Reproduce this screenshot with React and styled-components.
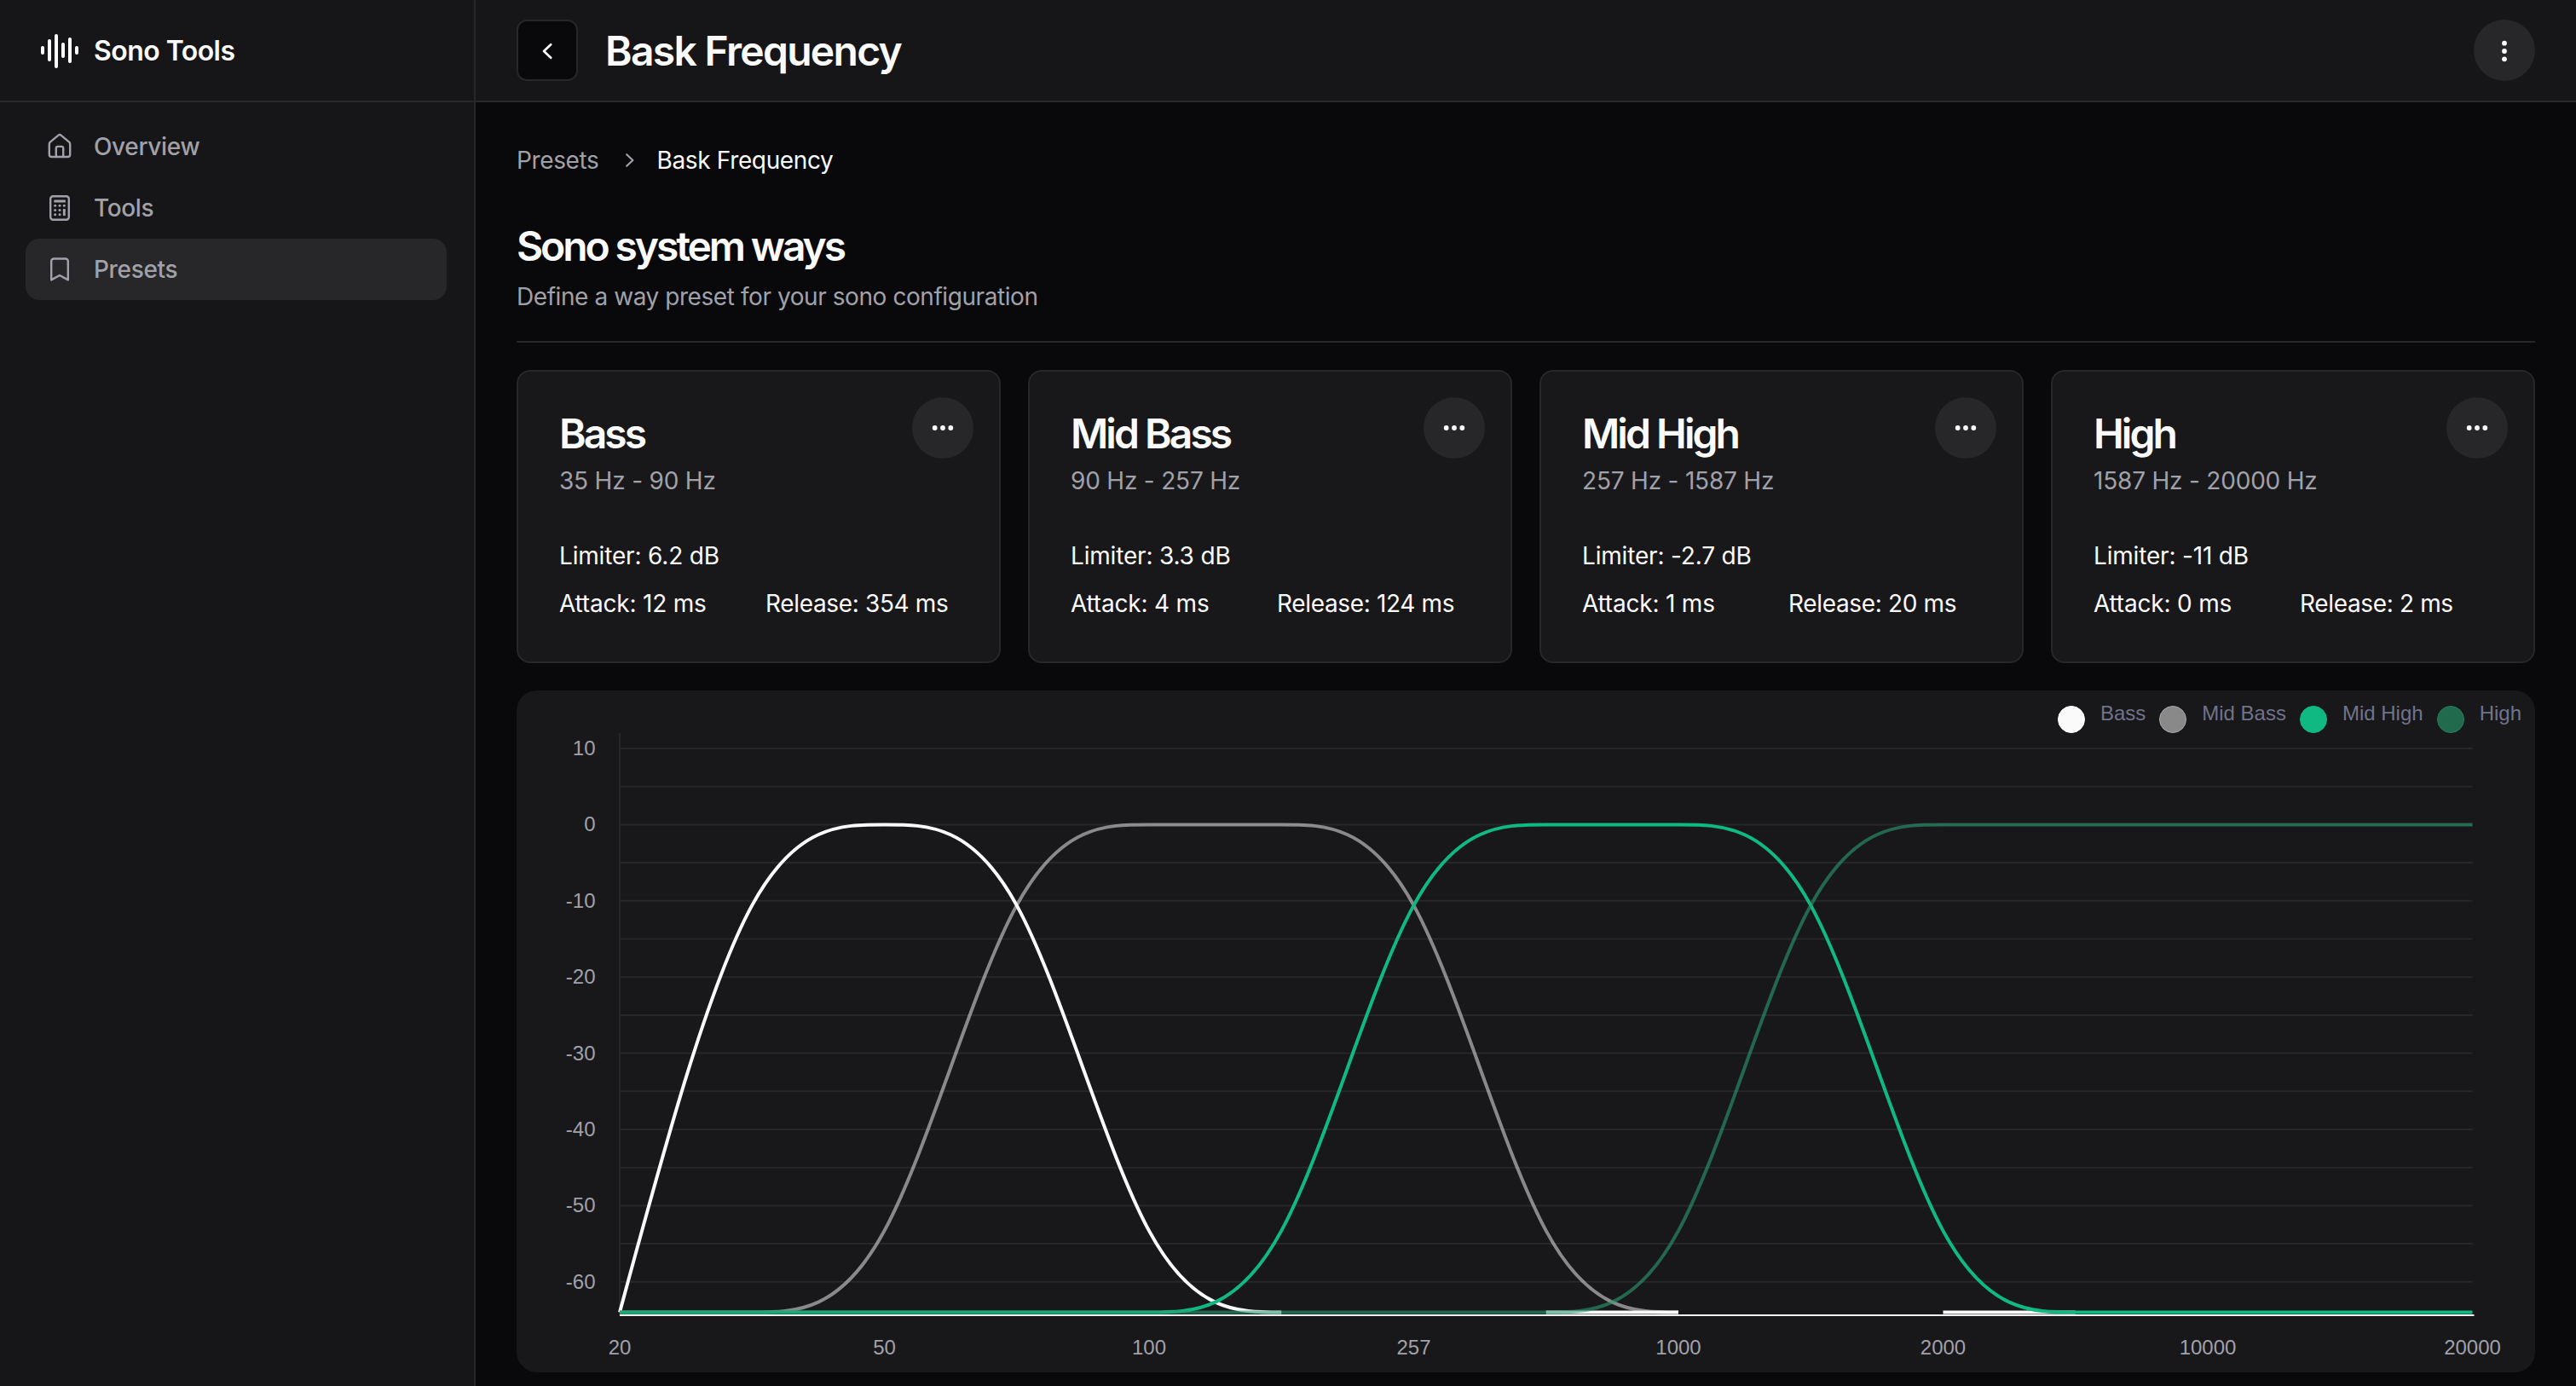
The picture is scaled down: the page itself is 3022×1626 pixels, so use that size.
import styled, { createGlobalStyle } from "styled-components";
import { AudioLines } from "lucide-react";

const GlobalStyle = createGlobalStyle`
  * {
    box-sizing: border-box;
    margin: 0;
    padding: 0;
  }

  body {
    background: #09090b;
    color: #fafafa;
    font-family: Inter, sans-serif;
    font-size: 28px;
    line-height: 40px;
    overflow: hidden;
  }
`;

const Container = styled.div`
  display: grid;
  grid-template-columns: 558px 1fr;
  height: 1626px;
`;

const Sidebar = styled.aside`
  background: #161618;
  border-right: 2px solid #27272a;
`;

const Brand = styled.div`
  display: flex;
  align-items: center;
  gap: 16px;
  height: 120px;
  padding: 2px 0 0 46px;
  border-bottom: 2px solid #27272a;
`;

const BrandName = styled.span`
  font-size: 32px;
  font-weight: 600;
  letter-spacing: -0.55px;
`;

const Nav = styled.nav`
  display: flex;
  flex-direction: column;
  padding: 16px 32px 16px 30px;
`;

const NavItem = styled.a`
  display: flex;
  align-items: center;
  gap: 24px;
  height: 72px;
  padding: 0 24px;
  border-radius: 16px;
  color: #a1a1aa;
  font-weight: 500;
  letter-spacing: -0.35px;
  background: ${({ $active }) => ($active ? "#27272a" : "transparent")};
`;

const Main = styled.main`
  display: flex;
  flex-direction: column;
`;

const Header = styled.header`
  display: flex;
  align-items: center;
  gap: 32px;
  height: 120px;
  padding: 0 48px;
  background: #161618;
  border-bottom: 2px solid #27272a;
`;

const BackButton = styled.button`
  display: flex;
  align-items: center;
  justify-content: center;
  width: 72px;
  height: 72px;
  background: #09090b;
  border: 2px solid #27272a;
  border-radius: 12px;
`;

const PageTitle = styled.h1`
  flex: 1;
  padding-top: 2px;
  font-size: 48px;
  line-height: 48px;
  font-weight: 600;
  letter-spacing: -1.7px;
`;

const RoundButton = styled.button`
  display: flex;
  align-items: center;
  justify-content: center;
  flex-shrink: 0;
  width: 72px;
  height: 72px;
  background: #27272a;
  border: none;
  border-radius: 50%;
`;

const Content = styled.div`
  padding: 48px;
`;

const Breadcrumb = styled.div`
  display: flex;
  align-items: center;
  gap: 20px;
`;

const Crumb = styled.span`
  color: ${({ $current }) => ($current ? "#fafafa" : "#a1a1aa")};
  letter-spacing: -0.36px;
`;

const Title = styled.h2`
  font-size: 48px;
  line-height: 50px;
  font-weight: 600;
  letter-spacing: -2.95px;
`;

const Muted = styled.p`
  color: #a1a1aa;
  letter-spacing: -0.2px;
`;

const Description = styled(Muted)`
  letter-spacing: -0.43px;
`;

const Section = styled.section`
  display: flex;
  flex-direction: column;
  gap: 14px;
  margin-top: 56px;
  padding-bottom: 32px;
  border-bottom: 2px solid #27272a;

  ${Title} {
    letter-spacing: -3.12px;
  }
`;

const Cards = styled.div`
  display: grid;
  grid-template-columns: repeat(4, 1fr);
  gap: 32px;
  margin: 32px 0;
`;

const Card = styled.article`
  height: 344px;
  padding: 48px;
  background: #18181b;
  border: 2px solid #27272a;
  border-radius: 16px;
`;

const CardHeader = styled.div`
  display: flex;
  justify-content: space-between;
  height: 100px;
  margin-bottom: 48px;

  ${RoundButton} {
    margin: -18px -18px 0 0;
  }
`;

const CardHeading = styled.div`
  display: flex;
  flex-direction: column;
  gap: 10px;
`;

const Settings = styled.div`
  display: grid;
  grid-template-columns: 1fr 1fr;
  gap: 16px;
`;

const Setting = styled.p`
  white-space: nowrap;
  letter-spacing: -0.2px;
`;

const Limiter = styled(Setting)`
  grid-column: span 2;
  letter-spacing: -0.18px;
`;

const Release = styled(Setting)`
  letter-spacing: -0.35px;
`;

const ChartPanel = styled.div`
  height: 800px;
  background: #18181b;
  border-radius: 24px;
`;

const Legend = styled.div`
  display: flex;
  justify-content: flex-end;
  gap: 16px;
  height: 50px;
  padding: 18px 16px 0 0;
  font-family: "Liberation Sans", sans-serif;
  font-size: 24px;
  line-height: 18px;
  color: #70738a;
`;

const LegendItem = styled.div`
  display: flex;
  gap: 18px;
`;

const Dot = styled.span`
  width: 32px;
  height: 32px;
  border-radius: 50%;
  background: ${({ $color }) => $color};
  border: 1px solid ${({ $rim }) => $rim};
`;

const Plot = styled.svg`
  display: block;
  font-family: "Liberation Sans", sans-serif;
  font-size: 24px;
  fill: #a1a1aa;
`;

const Icon = ({ children }) => (
  <svg
    width="32"
    height="32"
    viewBox="0 0 32 32"
    fill="none"
    stroke="currentColor"
    strokeWidth="2.4"
    strokeLinecap="round"
    strokeLinejoin="round"
  >
    {children}
  </svg>
);

const HomeIcon = () => (
  <Icon>
    <path d="M3.8 13.2c0-1.1.4-1.8 1.1-2.5l9.6-8c.9-.8 2.1-.8 3 0l9.6 8c.7.7 1.1 1.4 1.1 2.5v12a2.8 2.8 0 0 1-2.8 2.8H6.6a2.8 2.8 0 0 1-2.8-2.8z" />
    <path d="M11.8 28V17.9a2 2 0 0 1 2-2h4.4a2 2 0 0 1 2 2V28" />
  </Icon>
);

const CalculatorIcon = () => (
  <Icon>
    <rect x="5.2" y="2.2" width="21.6" height="27.6" rx="3" />
    <g fill="currentColor" stroke="none">
      <rect x="9.3" y="6.4" width="13.6" height="3.2" rx="0.6" />
      {[13.3, 18.4, 23.7].map((y) =>
        [10.7, 16, 21.3].map((x) => <circle key={`${x}-${y}`} cx={x} cy={y} r="1.5" />)
      )}
      <rect x="19.9" y="17" width="2.8" height="8.1" rx="1.3" />
    </g>
  </Icon>
);

const BookmarkIcon = () => (
  <Icon>
    <path d="M6.2 28.4V6.5a3 3 0 0 1 3-3h13.6a3 3 0 0 1 3 3v21.9L16 23z" />
  </Icon>
);

const BackIcon = () => (
  <svg width="32" height="32" viewBox="0 0 32 32" fill="none">
    <path
      d="M20.2 9.2L12 17l8.2 7.8"
      stroke="#fafafa"
      strokeWidth="2.7"
      strokeLinecap="round"
      strokeLinejoin="round"
    />
  </svg>
);

const CrumbArrow = () => (
  <svg width="28" height="28" viewBox="0 0 28 28" fill="none">
    <path
      d="M12.2 7.2L19.4 14l-7.2 6.8"
      stroke="#a1a1aa"
      strokeWidth="2.2"
      strokeLinecap="round"
      strokeLinejoin="round"
    />
  </svg>
);

const Dots = ({ vertical }) => (
  <svg width="32" height="32" viewBox="0 0 32 32" fill="#fafafa">
    {[6.7, 16, 25.3].map((p) => (
      <circle key={p} cx={vertical ? 16 : p} cy={vertical ? p + 1 : 16} r="2.9" />
    ))}
  </svg>
);

const ways = [
  { name: "Bass", range: "35 Hz - 90 Hz", limiter: "6.2", attack: 12, release: 354 },
  { name: "Mid Bass", range: "90 Hz - 257 Hz", limiter: "3.3", attack: 4, release: 124 },
  { name: "Mid High", range: "257 Hz - 1587 Hz", limiter: "-2.7", attack: 1, release: 20 },
  { name: "High", range: "1587 Hz - 20000 Hz", limiter: "-11", attack: 0, release: 2 },
];

const legend = [
  { name: "Bass", color: "#fafafa", rim: "#ffffff" },
  { name: "Mid Bass", color: "#898989", rim: "#a8a8a8" },
  { name: "Mid High", color: "#10b981", rim: "#10b981" },
  { name: "High", color: "#216a4e", rim: "#22805c" },
];

const LOW = -64;
const SLOPE = -53.3;
const CROSS = -10.6;

// each run is [first index, values]; gaps between runs are not drawn
const series = [
  {
    color: "#fafafa",
    opacity: 1,
    runs: [
      [0, [LOW, CROSS, 0, CROSS, SLOPE, LOW]],
      [7, [LOW, LOW]],
      [10, [LOW, LOW]],
    ],
  },
  {
    color: "#fafafa",
    opacity: 0.5,
    runs: [[0, [LOW, LOW, SLOPE, CROSS, 0, 0, CROSS, SLOPE, LOW]]],
  },
  {
    color: "#10b981",
    opacity: 1,
    runs: [
      [0, [LOW, LOW, LOW, LOW, LOW, SLOPE, CROSS, 0, 0, CROSS, SLOPE, LOW, LOW, LOW, LOW]],
    ],
  },
  {
    color: "#2a9d72",
    opacity: 0.6,
    runs: [
      [0, [LOW, LOW, LOW, LOW, LOW, LOW, LOW, LOW, SLOPE, CROSS, 0, 0, 0, 0, 0]],
    ],
  },
];

const xLabels = [20, 50, 100, 257, 1000, 2000, 10000, 20000];
const gridValues = Array.from({ length: 15 }, (_, i) => 10 - i * 5);

const X0 = 121;
const X1 = 2294.5;
const STEP = (X1 - X0) / 14;
const xAt = (i) => X0 + i * STEP;
const yAt = (v) => 107.4 - v * 8.94;

// monotone cubic through evenly spaced points
const smoothPath = ([start, values]) => {
  const ys = values.map(yAt);
  const last = ys.length - 1;
  const tangents = ys.map((y, i) => {
    if (i === 0 || i === last) return 0;
    const before = y - ys[i - 1];
    const after = ys[i + 1] - y;
    if (before * after <= 0) return 0;
    return Math.sign(after) * 3 * Math.min(Math.abs(before), Math.abs(after));
  });
  tangents[0] = (3 * (ys[1] - ys[0]) - tangents[1]) / 2;
  let d = `M${xAt(start)},${ys[0]}`;
  for (let i = 0; i < last; i++) {
    const x = xAt(start + i);
    d += `C${x + STEP / 3},${ys[i] + tangents[i] / 3}`;
    d += ` ${x + (STEP * 2) / 3},${ys[i + 1] - tangents[i + 1] / 3}`;
    d += ` ${x + STEP},${ys[i + 1]}`;
  }
  return d;
};

const Chart = () => (
  <ChartPanel>
    <Legend>
      {legend.map(({ name, color, rim }) => (
        <LegendItem key={name}>
          <Dot $color={color} $rim={rim} />
          {name}
        </LegendItem>
      ))}
    </Legend>
    <Plot width="2368" height="750" viewBox="0 0 2368 750">
      {gridValues.map((v) => (
        <line key={v} x1={X0} x2={X1} y1={yAt(v)} y2={yAt(v)} stroke="#27272a" strokeWidth="2" />
      ))}
      <line x1={X0} x2={X0} y1="0" y2="683" stroke="#27272a" strokeWidth="2" />
      {gridValues
        .filter((v) => v % 10 === 0)
        .map((v) => (
          <text key={v} x="92.5" y={yAt(v) + 8} textAnchor="end">
            {v}
          </text>
        ))}
      {xLabels.map((label, i) => (
        <text key={label} x={xAt(i * 2)} y="729" textAnchor="middle">
          {label}
        </text>
      ))}
      <line x1={X0} x2={X1 + 2} y1="683" y2="683" stroke="#f0f0f0" strokeWidth="2" />
      {series.map(({ color, opacity, runs }, i) => (
        <g key={i} fill="none" stroke={color} strokeOpacity={opacity} strokeWidth="4">
          {runs.map((run) => (
            <path key={run[0]} d={smoothPath(run)} strokeLinejoin="bevel" />
          ))}
        </g>
      ))}
    </Plot>
  </ChartPanel>
);

export default function App() {
  return (
    <Container>
      <GlobalStyle />
      <Sidebar>
        <Brand>
          <AudioLines size={48} color="#ffffff" />
          <BrandName>Sono Tools</BrandName>
        </Brand>
        <Nav>
          <NavItem>
            <HomeIcon />
            Overview
          </NavItem>
          <NavItem>
            <CalculatorIcon />
            Tools
          </NavItem>
          <NavItem $active>
            <BookmarkIcon />
            Presets
          </NavItem>
        </Nav>
      </Sidebar>
      <Main>
        <Header>
          <BackButton>
            <BackIcon />
          </BackButton>
          <PageTitle>Bask Frequency</PageTitle>
          <RoundButton>
            <Dots vertical />
          </RoundButton>
        </Header>
        <Content>
          <Breadcrumb>
            <Crumb>Presets</Crumb>
            <CrumbArrow />
            <Crumb $current>Bask Frequency</Crumb>
          </Breadcrumb>
          <Section>
            <Title>Sono system ways</Title>
            <Description>Define a way preset for your sono configuration</Description>
          </Section>
          <Cards>
            {ways.map(({ name, range, limiter, attack, release }) => (
              <Card key={name}>
                <CardHeader>
                  <CardHeading>
                    <Title>{name}</Title>
                    <Muted>{range}</Muted>
                  </CardHeading>
                  <RoundButton>
                    <Dots />
                  </RoundButton>
                </CardHeader>
                <Settings>
                  <Limiter>Limiter: {limiter} dB</Limiter>
                  <Setting>Attack: {attack} ms</Setting>
                  <Release>Release: {release} ms</Release>
                </Settings>
              </Card>
            ))}
          </Cards>
          <Chart />
        </Content>
      </Main>
    </Container>
  );
}
